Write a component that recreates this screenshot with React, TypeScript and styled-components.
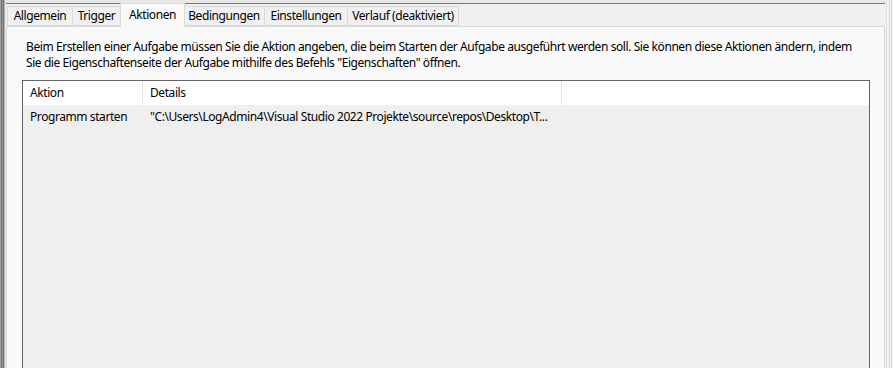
import styled, { createGlobalStyle } from 'styled-components'

const GlobalStyle = createGlobalStyle`
  html, body {
    margin: 0;
    padding: 0;
    width: 893px;
    height: 368px;
    overflow: hidden;
    background: #f0f0f0;
  }
  body {
    font-family: "Noto Sans", "Open Sans", sans-serif;
    font-size: 12px;
    letter-spacing: -0.42px;
    color: #000;
  }
`

const Window = styled.div`
  display: flex;
  width: 893px;
  height: 368px;
  overflow: hidden;
  background: #f0f0f0;
`

const LeftFrame = styled.div`
  width: 6px;
  flex: none;
  background: linear-gradient(
    to right,
    #a3a3a3 0 1px,
    #6f6f6f 1px 2px,
    #9a9a9a 2px 3px,
    #707070 3px 4px,
    #b9b9b9 4px 5px,
    #e6e6e6 5px 6px
  );
`

const RightFrame = styled.div`
  width: 8px;
  flex: none;
  background: linear-gradient(
    to right,
    #f0f0f0 0 1px,
    #dedede 1px 2px,
    #f4f4f4 2px 4px,
    #d8d8d8 4px 5px,
    #f4f4f4 5px 6px,
    #dcdcdc 6px 7px,
    #f0f0f0 7px 8px
  );
`

const Main = styled.div`
  flex: 1;
  display: flex;
  flex-direction: column;
  min-width: 0;
`

const TopLine = styled.div`
  height: 3px;
  flex: none;
  border-bottom: 1px solid #777;
  background: #e8e8e8;
  margin-right: -4px;
`

const TabBar = styled.div`
  display: flex;
  align-items: flex-end;
  height: 22px;
  padding-left: 1px;
  position: relative;
  z-index: 1;
  flex: none;
`

type TabProps = { $w: number; $active?: boolean; $first?: boolean }

const Tab = styled.div<TabProps>`
  box-sizing: border-box;
  width: ${p => p.$w}px;
  height: ${p => (p.$active ? 24 : 20)}px;
  margin-bottom: ${p => (p.$active ? -1 : 0)}px;
  margin-left: ${p => (p.$active ? -1 : 0)}px;
  margin-right: ${p => (p.$active ? -1 : 0)}px;
  display: flex;
  align-items: center;
  justify-content: center;
  padding-bottom: ${p => (p.$active ? 3 : 1)}px;
  background: ${p => (p.$active ? '#f9f9f9' : '#f0f0f0')};
  border: 1px solid #d9d9d9;
  border-bottom: ${p => (p.$active ? 'none' : '1px solid #d9d9d9')};
  border-left-width: ${p => (p.$first || p.$active ? 1 : 0)}px;
  white-space: nowrap;
  position: relative;
  z-index: ${p => (p.$active ? 2 : 1)};
`

const Panel = styled.div`
  flex: 1;
  display: flex;
  flex-direction: column;
  background: #f9f9f9;
  border: 1px solid #d9d9d9;
  border-bottom: none;
  padding: 12px 14px 0 15px;
  min-height: 0;
`

const Description = styled.p`
  margin: 0 0 9px 4px;
  line-height: 16px;
  white-space: nowrap;
`

const ListView = styled.div`
  flex: 1;
  border: 1px solid #646464;
  border-bottom: none;
  background: #efefef;
  display: flex;
  flex-direction: column;
`

const HeaderRow = styled.div`
  display: flex;
  height: 24px;
  background: #fff;
`

const HeaderCell = styled.div<{ $w?: number }>`
  box-sizing: border-box;
  ${p => (p.$w ? `width: ${p.$w}px;` : 'flex: 1;')}
  padding-left: 7px;
  display: flex;
  align-items: center;
  border-right: ${p => (p.$w ? '1px solid #e5e5e5' : 'none')};
  padding-bottom: 1px;
`

const Row = styled.div`
  display: flex;
  height: 22px;
  background: #efefef;
`

const Cell = styled.div<{ $w?: number }>`
  box-sizing: border-box;
  ${p => (p.$w ? `width: ${p.$w}px;` : 'flex: 1;')}
  padding-left: 7px;
  display: flex;
  align-items: center;
  white-space: nowrap;
  overflow: hidden;
`

const tabs = [
  { label: 'Allgemein', w: 66 },
  { label: 'Trigger', w: 48 },
  { label: 'Aktionen', w: 65, active: true },
  { label: 'Bedingungen', w: 81 },
  { label: 'Einstellungen', w: 83 },
  { label: 'Verlauf (deaktiviert)', w: 111 },
]

export default function App() {
  return (
    <Window>
      <GlobalStyle />
      <LeftFrame />
      <Main>
        <TopLine />
        <TabBar>
          {tabs.map((t, i) => (
            <Tab key={t.label} $w={t.w} $active={t.active} $first={i === 0}>
              {t.label}
            </Tab>
          ))}
        </TabBar>
        <Panel>
          <Description>
            Beim Erstellen einer Aufgabe müssen Sie die Aktion angeben, die beim Starten der Aufgabe ausgeführt werden soll. Sie können diese Aktionen ändern, indem
            <br />
            Sie die Eigenschaftenseite der Aufgabe mithilfe des Befehls "Eigenschaften" öffnen.
          </Description>
          <ListView>
            <HeaderRow>
              <HeaderCell $w={120}>Aktion</HeaderCell>
              <HeaderCell $w={419}>Details</HeaderCell>
              <HeaderCell />
            </HeaderRow>
            <Row>
              <Cell $w={120}>Programm starten</Cell>
              <Cell>"C:\Users\LogAdmin4\Visual Studio 2022 Projekte\source\repos\Desktop\T...</Cell>
            </Row>
          </ListView>
        </Panel>
      </Main>
      <RightFrame />
    </Window>
  )
}
